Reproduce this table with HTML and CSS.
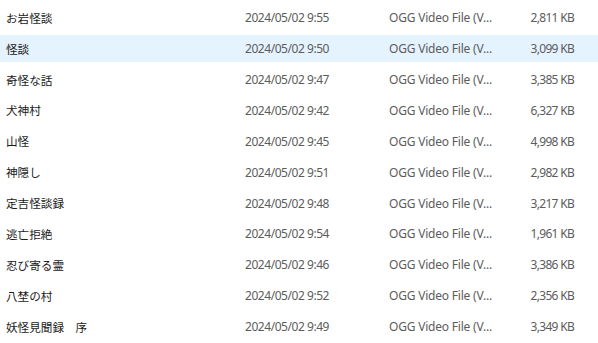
FILE: index.html
```html
<!DOCTYPE html>
<html lang="ja">
<head>
<meta charset="utf-8">
<link rel="stylesheet" href="styles.css">
</head>
<body>
<div class="list">
  <div class="row"><span class="name">お岩怪談</span><span class="date">2024/05/02 9:55</span><span class="type">OGG Video File (V...</span><span class="size">2,811 KB</span></div>
  <div class="row selected"><span class="name">怪談</span><span class="date">2024/05/02 9:50</span><span class="type">OGG Video File (V...</span><span class="size">3,099 KB</span></div>
  <div class="row"><span class="name">奇怪な話</span><span class="date">2024/05/02 9:47</span><span class="type">OGG Video File (V...</span><span class="size">3,385 KB</span></div>
  <div class="row"><span class="name">犬神村</span><span class="date">2024/05/02 9:42</span><span class="type">OGG Video File (V...</span><span class="size">6,327 KB</span></div>
  <div class="row"><span class="name">山怪</span><span class="date">2024/05/02 9:45</span><span class="type">OGG Video File (V...</span><span class="size">4,998 KB</span></div>
  <div class="row"><span class="name">神隠し</span><span class="date">2024/05/02 9:51</span><span class="type">OGG Video File (V...</span><span class="size">2,982 KB</span></div>
  <div class="row"><span class="name">定吉怪談録</span><span class="date">2024/05/02 9:48</span><span class="type">OGG Video File (V...</span><span class="size">3,217 KB</span></div>
  <div class="row"><span class="name">逃亡拒絶</span><span class="date">2024/05/02 9:54</span><span class="type">OGG Video File (V...</span><span class="size">1,961 KB</span></div>
  <div class="row"><span class="name">忍び寄る霊</span><span class="date">2024/05/02 9:46</span><span class="type">OGG Video File (V...</span><span class="size">3,386 KB</span></div>
  <div class="row"><span class="name">八埜の村</span><span class="date">2024/05/02 9:52</span><span class="type">OGG Video File (V...</span><span class="size">2,356 KB</span></div>
  <div class="row"><span class="name">妖怪見聞録　序</span><span class="date">2024/05/02 9:49</span><span class="type">OGG Video File (V...</span><span class="size">3,349 KB</span></div>
</div>
</body>
</html>
```
FILE: styles.css
```css
html, body {
  margin: 0;
  padding: 0;
  background: #ffffff;
}
body {
  font-family: "Noto Sans", "Noto Sans CJK JP", sans-serif;
  font-size: 12px;
  overflow: hidden;
}
.list {
  display: flex;
  flex-direction: column;
  gap: 4.4px;
  padding-top: 4.5px;
}
.row {
  height: 26.5px;
  display: grid;
  grid-template-columns: 245px 144px 120px 65px;
  align-items: center;
  white-space: nowrap;
}
.row.selected {
  background: #e5f3ff;
}
.name {
  padding-left: 6px;
  color: #1a1a1a;
  font-family: "Noto Sans CJK JP", sans-serif;
  font-size: 11.6px;
}
.date, .type, .size {
  color: #5c5c5c;
}
.date {
  letter-spacing: -0.45px;
}
.type {
  letter-spacing: -0.2px;
}
.size {
  text-align: right;
  letter-spacing: -0.7px;
}
```
